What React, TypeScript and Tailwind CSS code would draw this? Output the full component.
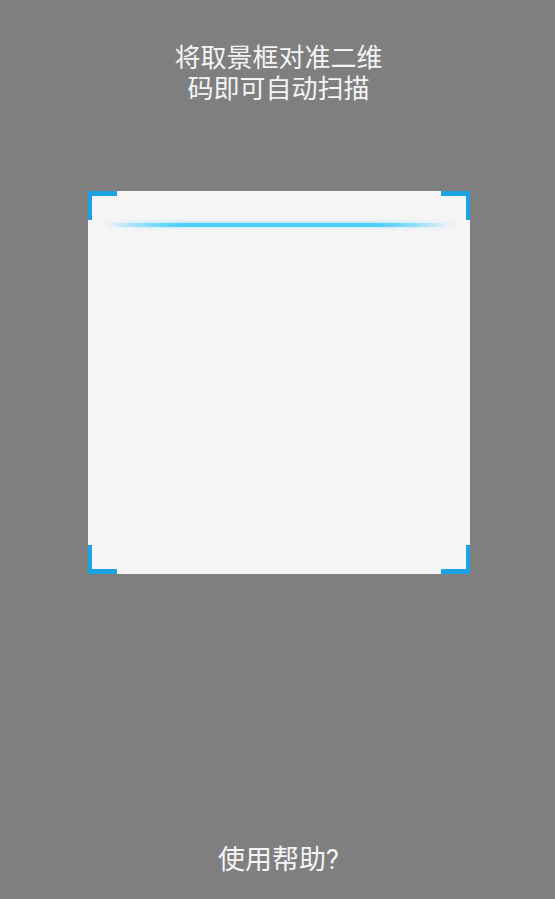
export default function App() {
  return (
    <div
      className="flex h-[899px] w-full flex-col items-center bg-[#7f7f7f] text-[#f4f4f4]"
      style={{ fontFamily: '"Noto Sans CJK SC", "Noto Sans", sans-serif' }}
    >
      {/* Hint */}
      <p className="mt-[40px] ml-[2px] w-[210px] text-center text-[26px] leading-[31px]">
        将取景框对准二维码即可自动扫描
      </p>

      {/* Scan frame */}
      <div className="relative mt-[89px] ml-[2px] h-[383px] w-[382px] bg-[#f5f5f5]">
        <span className="absolute left-0 top-0 h-[29px] w-[29px] border-l-4 border-t-[5px] border-[#1ca3e3]" />
        <span className="absolute right-0 top-0 h-[29px] w-[29px] border-r-4 border-t-[5px] border-[#1ca3e3]" />
        <span className="absolute bottom-0 left-0 h-[29px] w-[29px] border-b-[5px] border-l-4 border-[#1ca3e3]" />
        <span className="absolute bottom-0 right-0 h-[29px] w-[29px] border-b-[5px] border-r-4 border-[#1ca3e3]" />

        {/* Scan line */}
        <div className="absolute left-[12px] right-[12px] top-[30px] h-[7px] bg-[linear-gradient(to_right,transparent,#c4ecfc_20%,#c4ecfc_80%,transparent)] blur-[1.5px]" />
        <div className="absolute left-[18px] right-[18px] top-[32px] h-[4px] bg-[linear-gradient(to_right,transparent,#4ccdfb_22%,#4ccdfb_78%,transparent)]" />
      </div>

      <div className="flex-1" />

      {/* Help */}
      <p className="mb-[23px] ml-[2px] text-[27px] leading-[31px]">
        使用帮助<span style={{ fontFamily: 'Roboto, "Noto Sans", sans-serif' }}>?</span>
      </p>
    </div>
  );
}
